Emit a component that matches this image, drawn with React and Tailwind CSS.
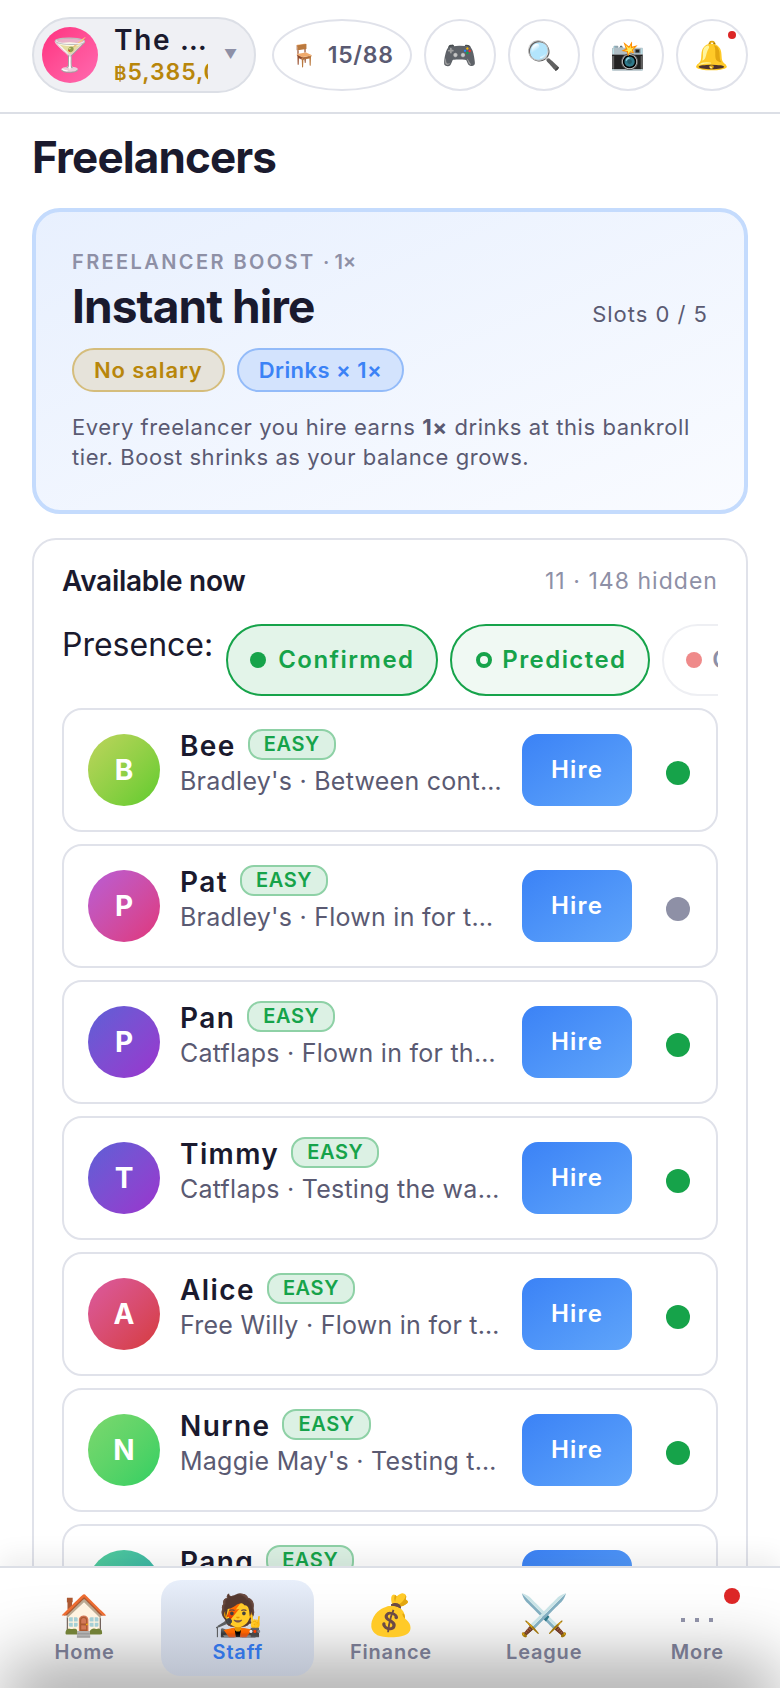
import React from 'react';

const FONT = "font-['Inter','Noto_Color_Emoji',sans-serif]";

const freelancers = [
  { name: 'Bee', sub: "Bradley's · Between contracts", grad: 'from-[#bdd45c] to-[#5ccb2c]', dot: 'bg-[#16a34a]' },
  { name: 'Pat', sub: "Bradley's · Flown in for the week", grad: 'from-[#b85cd6] to-[#e0337a]', dot: 'bg-[#8e90a6]' },
  { name: 'Pan', sub: 'Catflaps · Flown in for the week', grad: 'from-[#5b5fd6] to-[#9a32cd]', dot: 'bg-[#16a34a]' },
  { name: 'Timmy', sub: 'Catflaps · Testing the waters', grad: 'from-[#5b5fd6] to-[#9a32cd]', dot: 'bg-[#16a34a]' },
  { name: 'Alice', sub: 'Free Willy · Flown in for the week', grad: 'from-[#db5aa0] to-[#d63a3a]', dot: 'bg-[#16a34a]' },
  { name: 'Nurne', sub: "Maggie May's · Testing the waters", grad: 'from-[#7bd86e] to-[#2dcf62]', dot: 'bg-[#16a34a]' },
  { name: 'Pang', sub: 'Catflaps · Between contracts', grad: 'from-[#55d09a] to-[#2ba6ad]', dot: 'bg-[#16a34a]' },
];

const tabs = [
  { icon: '🏠', label: 'Home' },
  { icon: '🧑‍🎤', label: 'Staff', active: true },
  { icon: '💰', label: 'Finance' },
  { icon: '⚔️', label: 'League' },
  { label: 'More', badge: true },
];

function RoundButton({ children, badge }) {
  return (
    <div className="relative flex h-[72px] w-[72px] shrink-0 items-center justify-center rounded-full border-2 border-[#e0e2ea] bg-white text-[28px]">
      {children}
      {badge && <span className="absolute right-[10px] top-[10px] h-2 w-2 rounded-full bg-[#dc2626]" />}
    </div>
  );
}

function FreelancerRow({ f }) {
  return (
    <div className="flex h-[124px] items-center rounded-[20px] border-2 border-[#e0e2ea] bg-white pl-6 pr-[26px]">
      <div className={`flex h-[72px] w-[72px] shrink-0 items-center justify-center rounded-full bg-gradient-to-br ${f.grad} text-[28px] font-bold text-white`}>
        {f.name[0]}
      </div>
      <div className="ml-5 min-w-0 flex-1 pb-[13px]">
        <div className="flex h-[36px] items-center gap-3">
          <span className="text-[28px] font-semibold leading-9 tracking-[0.05em] text-[#1a1a2e]">{f.name}</span>
          <span className="-mt-[3px] rounded-[14px] border-2 border-[#8ed1a6] bg-[#dcf1e4] px-[14px] text-[20px] font-semibold leading-[27px] tracking-[0.03em] text-[#16a34a]">EASY</span>
        </div>
        <div className="truncate text-[25px] leading-[34px] tracking-[0.01em] text-[#5a5a72]">{f.sub}</div>
      </div>
      <div className="ml-5 flex h-[72px] w-[110px] shrink-0 items-center justify-center rounded-[16px] bg-gradient-to-br from-[#3b82f6] to-[#60a5fa] text-[24px] font-semibold tracking-[0.05em] text-white">
        Hire
      </div>
      <div className={`ml-[34px] mt-[6px] h-6 w-6 shrink-0 rounded-full ${f.dot}`} />
    </div>
  );
}

export default function App() {
  return (
    <div className={`relative h-[1688px] w-[780px] overflow-hidden bg-white ${FONT}`}>
      <header className="flex h-[114px] items-center gap-3 border-b-2 border-[#dcdfe6] pb-[2px] pl-8 pr-8">
        <div className="flex h-[76px] w-[224px] shrink-0 items-center rounded-full border-2 border-[#dcdfe6] bg-[#eff0f4] pl-[8px]">
          <div className="flex h-14 w-14 shrink-0 items-center justify-center rounded-full bg-gradient-to-br from-[#ff2d7f] to-[#ff69b0] text-[32px]">🍸</div>
          <div className="ml-[16px] w-[94px] overflow-hidden">
            <div className="truncate text-[28px] font-semibold leading-[36px] tracking-[0.06em] text-[#1a1a2e]">The Martini</div>
            <div className="whitespace-nowrap text-[23px] font-semibold leading-[28px] tracking-[0.04em] text-[#b8860b]"><span className="text-[19px]">฿</span>5,385,000</div>
          </div>
          <span className="ml-[16px] text-[13px] text-[#8e90a6]">▼</span>
        </div>
        <div className="ml-1 flex h-[72px] w-[140px] shrink-0 items-center justify-center gap-[10px] rounded-[50%] border-2 border-[#e0e2ea] bg-white">
          <span className="text-[22px]">🪑</span>
          <span className="text-[23px] font-semibold tracking-[0.03em] text-[#5a5a72]">15/88</span>
        </div>
        <RoundButton>🎮</RoundButton>
        <RoundButton>🔍</RoundButton>
        <RoundButton>📸</RoundButton>
        <RoundButton badge>🔔</RoundButton>
      </header>

      <main className="px-8">
        <h1 className="mt-[18px] text-[44px] font-bold leading-[50px] tracking-[-0.02em] text-[#1a1a2e]">Freelancers</h1>

        <section className="mt-[26px] h-[306px] rounded-[28px] border-4 border-[#c4dbfd] bg-gradient-to-br from-[#e8f0fe] to-[#f9fbff] px-9 pt-[38px]">
          <div className="text-[20px] font-semibold leading-[24px] tracking-[0.12em] text-[#8e90a6]">FREELANCER BOOST <span className="tracking-normal">· 1×</span></div>
          <div className="mt-[5px] flex items-end justify-between">
            <div className="text-[46px] font-bold leading-[54px] tracking-[-0.02em] text-[#1a1a2e]">Instant hire</div>
            <div className="pb-[3px] text-[22px] leading-[32px] tracking-[0.045em] text-[#5a5a72]">Slots 0 / 5</div>
          </div>
          <div className="mt-[15px] flex gap-3">
            <span className="rounded-full border-2 border-[#d5bd7c] bg-[#e6e3da] px-[20px] text-[22px] font-semibold leading-[40px] tracking-[0.04em] text-[#b8860b]">No salary</span>
            <span className="rounded-full border-2 border-[#93bbf9] bg-[#d3e3fd] px-[20px] text-[22px] font-semibold leading-[40px] tracking-[0.02em] text-[#3b82f6]">Drinks × 1×</span>
          </div>
          <p className="mt-[20px] text-[22px] leading-[30px] tracking-[0.026em] text-[#5a5a72]">
            Every freelancer you hire earns <b className="font-bold">1×</b> drinks at this bankroll tier. Boost shrinks as your balance grows.
          </p>
        </section>

        <section className="mt-[24px] rounded-[24px] border-2 border-[#e0e2ea] bg-white px-[28px] pt-[24px]">
          <div className="flex items-center justify-between">
            <span className="text-[28px] font-semibold leading-[34px] tracking-[-0.01em] text-[#1a1a2e]">Available now</span>
            <span className="text-[23px] tracking-[0.045em] text-[#8e90a6]">11 · 148 hidden</span>
          </div>
          <div className="mt-[25px] flex items-start overflow-hidden">
            <span className="shrink-0 pt-[2px] text-[32px] leading-[38px] text-[#1a1a2e]">Presence:</span>
            <div className="ml-[13px] flex gap-3">
              <span className="flex h-[72px] w-[212px] shrink-0 items-center gap-[12px] rounded-full border-2 border-[#16a34a] bg-[#e3f4e9] pl-[22px] text-[24px] font-semibold tracking-[0.06em] text-[#16a34a]">
                <i className="h-4 w-4 rounded-full bg-[#16a34a]" />Confirmed
              </span>
              <span className="flex h-[72px] w-[200px] shrink-0 items-center gap-[10px] rounded-full border-2 border-[#16a34a] bg-[#f0f9f3] pl-[24px] text-[24px] font-semibold tracking-[0.06em] text-[#16a34a]">
                <i className="h-4 w-4 rounded-full border-[4px] border-[#16a34a]" />Predicted
              </span>
              <span className="flex h-[72px] w-[200px] shrink-0 items-center gap-[10px] rounded-full border-2 border-[#eeeff3] bg-white pl-[22px] text-[24px] font-semibold tracking-[0.06em] text-[#8e90a6]">
                <i className="h-4 w-4 rounded-full bg-[#ef8a8a]" />Off
              </span>
            </div>
          </div>
          <div className="mt-3 flex flex-col gap-3">
            {freelancers.map((f) => <FreelancerRow key={f.name} f={f} />)}
          </div>
        </section>
      </main>

      <nav className="absolute inset-x-0 bottom-0 grid h-[122px] grid-cols-5 overflow-visible border-t-2 border-[#dcdfe6] bg-white pl-2 pr-[6px] pt-3 shadow-[0_-10px_24px_rgba(0,0,0,0.07)]">
        <div className="absolute inset-x-[30px] -bottom-[24px] h-6 shadow-[0_0_70px_26px_rgba(0,0,0,0.36)]" />
        {tabs.map((t) => (
          <div key={t.label} className={`relative flex h-[96px] flex-col items-center rounded-[20px] pt-[11px] ${t.active ? 'bg-gradient-to-b from-[#e8effb] to-[#bcc2cf]' : ''}`}>
            {t.icon ? (
              <span className="text-[40px] leading-[48px]">{t.icon}</span>
            ) : (
              <span className="flex h-[48px] items-center gap-[10px] pt-[10px]">
                <i className="h-1 w-1 bg-[#8e90a6]" />
                <i className="h-1 w-1 bg-[#8e90a6]" />
                <i className="h-1 w-1 bg-[#8e90a6]" />
              </span>
            )}
            <span className={`text-[20px] font-semibold leading-[26px] tracking-[0.04em] ${t.active ? 'text-[#3273e0]' : 'text-[#74768c]'}`}>{t.label}</span>
            {t.badge && <span className="absolute right-[34px] top-2 h-4 w-4 rounded-full bg-[#dc2626]" />}
          </div>
        ))}
      </nav>
    </div>
  );
}
